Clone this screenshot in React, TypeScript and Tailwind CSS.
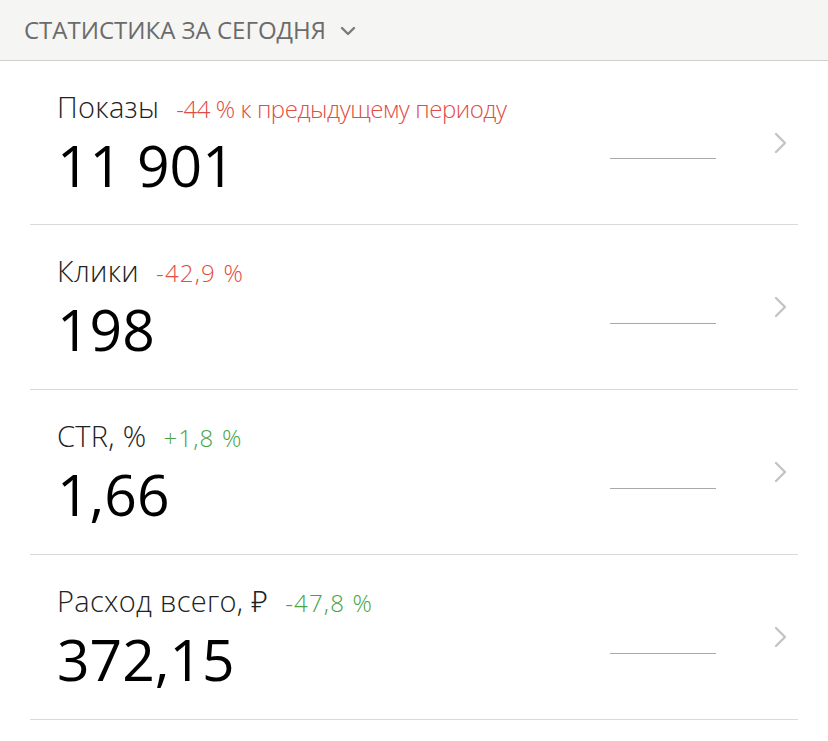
import React from "react";

type Row = { label: string; delta: string; positive: boolean; value: string; track: string };

const rows: Row[] = [
  { label: "Показы", delta: "-44 % к предыдущему периоду", positive: false, value: "11 901", track: "tracking-[-0.45px]" },
  { label: "Клики", delta: "-42,9 %", positive: false, value: "198", track: "tracking-[1.2px]" },
  { label: "CTR, %", delta: "+1,8 %", positive: true, value: "1,66", track: "tracking-[1.2px]" },
  { label: "Расход всего, ₽", delta: "-47,8 %", positive: true, value: "372,15", track: "tracking-[1.2px]" },
];

function Chevron() {
  return (
    <svg width="14" height="22" viewBox="0 0 14 22" fill="none">
      <path d="M2 2 L11 11 L2 20" stroke="#c4c4c4" strokeWidth="2.4" strokeLinecap="round" strokeLinejoin="round" />
    </svg>
  );
}

export default function App() {
  return (
    <div className="w-[828px] h-[741px] bg-white overflow-hidden font-['Open_Sans','Noto_Sans',sans-serif]">
      <div className="h-[61px] bg-[#f5f5f3] border-b border-[#cfcfcd] flex items-center pl-[24px]">
        <span className="text-[24px] text-[#6b6b6b] leading-none">СТАТИСТИКА ЗА СЕГОДНЯ</span>
        <svg className="ml-[14px] mt-[2px]" width="16" height="10" viewBox="0 0 16 10" fill="none">
          <path d="M2 2 L8 8 L14 2" stroke="#7a7a7a" strokeWidth="2.4" strokeLinecap="round" strokeLinejoin="round" />
        </svg>
      </div>
      <div className="px-[30px]">
        {rows.map((r) => (
          <div key={r.label} className="h-[165px] first:h-[164px] border-b border-[#d9d9d9] flex items-center pl-[27px] pr-[10px]">
            <div className="flex-1 flex flex-col">
              <div className="flex items-baseline">
                <span className="text-[29px] font-light text-[#222222] leading-none tracking-[0.3px]">{r.label}</span>
                <span className={`ml-[17px] text-[24px] font-light leading-none ${r.track} ${r.positive ? "text-[#47a446]" : "text-[#e14c44]"}`}>{r.delta}</span>
              </div>
              <div className="mt-[16px] text-[57px] leading-none text-black">{r.value}</div>
            </div>
            <div className="w-[106px] h-px bg-[#a8a8a8] mt-[32px] mr-[58px]" />
            <Chevron />
          </div>
        ))}
      </div>
    </div>
  );
}
